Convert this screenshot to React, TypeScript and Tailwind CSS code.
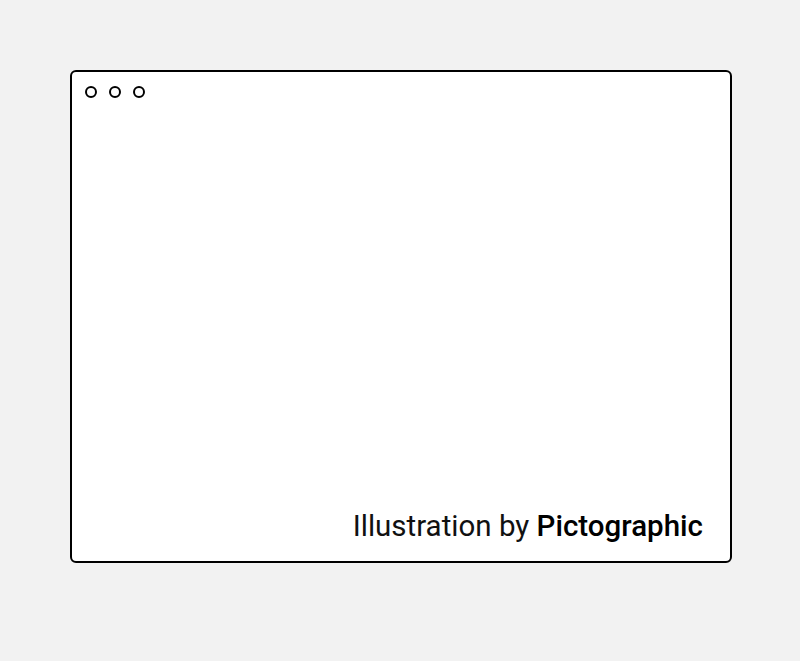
export default function App() {
  return (
    <div className="w-[800px] h-[661px] bg-[#f2f2f2] pt-[70px] pl-[70px]">
      <div className="w-[662px] h-[493px] bg-white border-2 border-black rounded-md flex flex-col pl-[13px] pr-[14px] pt-[14px] pb-[20px]">
        <div className="flex gap-[12px]">
          <span className="w-[12px] h-[12px] rounded-full border-2 border-black" />
          <span className="w-[12px] h-[12px] rounded-full border-2 border-black" />
          <span className="w-[12px] h-[12px] rounded-full border-2 border-black" />
        </div>
        <div className="flex-1" />
        <p
          className="self-end pr-[13px] text-[29.5px] leading-none text-[#111]"
          style={{ fontFamily: 'Roboto, sans-serif' }}
        >
          Illustration by <span className="font-medium text-black">Pictographic</span>
        </p>
      </div>
    </div>
  )
}
